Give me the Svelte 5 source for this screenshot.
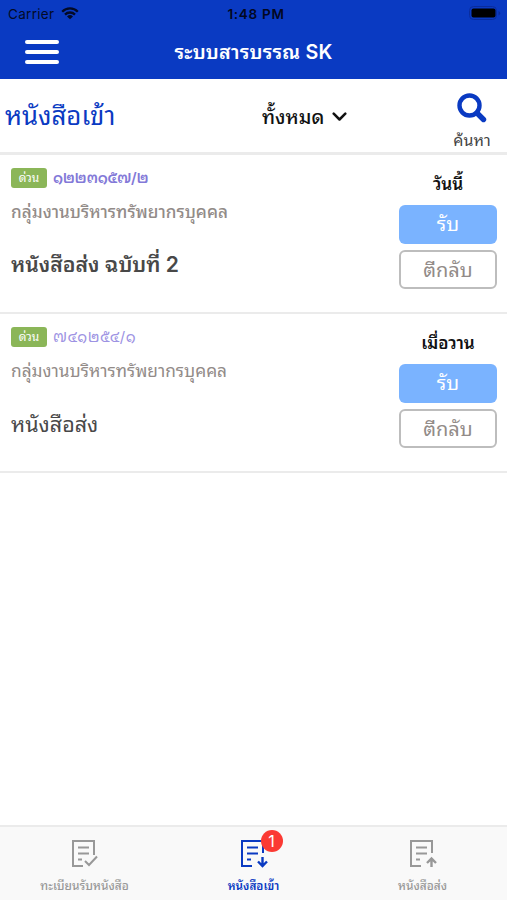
<script lang="ts">
  type Letter = {
    number: string;
    group: string;
    subject: string;
    day: string;
    unread: boolean;
  };

  const letters: Letter[] = [
    {
      number: "๑๒๒๓๑๕๗/๒",
      group: "กลุ่มงานบริหารทรัพยากรบุคคล",
      subject: "หนังสือส่ง ฉบับที่ 2",
      day: "วันนี้",
      unread: true,
    },
    {
      number: "๗๔๑๒๕๔/๑",
      group: "กลุ่มงานบริหารทรัพยากรบุคคล",
      subject: "หนังสือส่ง",
      day: "เมื่อวาน",
      unread: false,
    },
  ];

  const tabs = [
    { id: "register", label: "ทะเบียนรับหนังสือ", badge: 0 },
    { id: "inbox", label: "หนังสือเข้า", badge: 1 },
    { id: "outbox", label: "หนังสือส่ง", badge: 0 },
  ];

  let active = $state("inbox");
</script>

<div class="app">
  <header>
    <div class="status">
      <div class="carrier">
        <span>Carrier</span>
        <svg width="18" height="13" viewBox="0 0 18 13" fill="none" stroke="#030a26" stroke-width="2.3">
          <path d="M1.2 4.7a11 11 0 0 1 15.6 0" />
          <path d="M4 7.6a7 7 0 0 1 10 0" />
          <path d="M9 12.2 6 9.4a4.3 4.3 0 0 1 6 0z" fill="#030a26" stroke="none" />
        </svg>
      </div>
      <span class="time">1:48 PM</span>
      <svg class="battery" width="32" height="15" viewBox="0 0 32 15">
        <rect x="0.5" y="0.5" width="27" height="13" rx="4" fill="none" stroke="#0a2c9c" />
        <rect x="2.5" y="2.5" width="24" height="9" rx="2" fill="#000" />
        <path d="M29.5 5v4.5q1.7-.8 1.7-2.2T29.500 5z" fill="#0a2c9c" />
      </svg>
    </div>
    <div class="nav">
      <button class="menu" aria-label="เมนู"><i></i><i></i><i></i></button>
      <h1>ระบบสารบรรณ SK</h1>
    </div>
  </header>

  <div class="toolbar">
    <h2>หนังสือเข้า</h2>
    <button class="filter">
      <span>ทั้งหมด</span>
      <svg width="15" height="10" viewBox="0 0 15 10" fill="none" stroke="#111" stroke-width="2.5" stroke-linecap="round" stroke-linejoin="round">
        <path d="M1.700 1.700l5.800 5.800 5.800-5.800" />
      </svg>
    </button>
    <button class="search">
      <svg width="30" height="30" viewBox="0 0 30 30" fill="none" stroke="#0a3ac2">
        <circle cx="12.500" cy="12.500" r="10" stroke-width="4.400" />
        <path d="M20 20l6.500 6.500" stroke-width="5.400" stroke-linecap="round" />
      </svg>
      <span>ค้นหา</span>
    </button>
  </div>

  <main>
    {#each letters as letter}
      <article class:unread={letter.unread}>
        <div class="info">
          <div class="ref">
            <span class="tag">ด่วน</span>
            <span class="number">{letter.number}</span>
          </div>
          <p class="group">{letter.group}</p>
          <p class="subject">{letter.subject}</p>
        </div>
        <div class="actions">
          <span class="day">{letter.day}</span>
          <button class="accept">รับ</button>
          <button class="reject">ตีกลับ</button>
        </div>
      </article>
    {/each}
  </main>

  <nav class="tabs">
    {#each tabs as tab}
      <button class="tab" class:active={active === tab.id} onclick={() => (active = tab.id)}>
        <span class="icon">
          <svg width="28" height="28" viewBox="0 0 28 28" fill="none" stroke="currentColor" stroke-width="2">
            {#if tab.id === "register"}
              <path d="M12 26H2V1h21v14" />
              <path d="M14 21l4 4 8-8.500" />
            {:else}
              <path d="M12 26H2V1h21v12" />
            {/if}
            <path d="M7 7.500h11M7 13.500h11M7 19.500h4" />
            {#if tab.id === "inbox"}
              <path d="M22.500 17v8.500M18 21.500l4.500 4.500 4.500-4.500" stroke-width="2.400" />
            {:else if tab.id === "outbox"}
              <path d="M22.500 27v-8.500M18 23l4.500-4.500 4.500 4.500" stroke-width="2.400" />
            {/if}
          </svg>
          {#if tab.badge}<b class="badge">{tab.badge}</b>{/if}
        </span>
        <span class="label">{tab.label}</span>
      </button>
    {/each}
  </nav>
</div>

<style>
  :global(body) {
    background: #fff;
  }
  .app {
    display: flex;
    flex-direction: column;
    height: 900px;
    font-family: Inter, Thonburi, "Noto Sans Thai Looped", Loma, Garuda, Waree, "Noto Sans Thai", sans-serif;
    white-space: nowrap;
    overflow: hidden;
  }
  button {
    margin: 0;
    padding: 0;
    border: 0;
    background: none;
    font: inherit;
    color: inherit;
  }
  h1,
  h2,
  p {
    margin: 0;
  }
  header {
    height: 79px;
    background: #0a3ac2;
  }
  .status {
    display: grid;
    grid-template-columns: 1fr auto 1fr;
    align-items: center;
    height: 27px;
    padding: 0 6px 0 8px;
    font-size: 13.5px;
    color: #030a26;
  }
  .carrier {
    display: flex;
    align-items: center;
    gap: 7px;
    letter-spacing: 0.3px;
  }
  .time {
    padding-left: 3px;
    font-weight: 600;
    letter-spacing: 0.7px;
    color: #020720;
  }
  .battery {
    justify-self: end;
  }
  .nav {
    display: grid;
    grid-template-columns: 60px 1fr 60px;
    align-items: center;
    height: 50px;
  }
  .menu {
    display: flex;
    flex-direction: column;
    gap: 6px;
    width: 34px;
    margin-left: 25px;
  }
  .menu i {
    height: 4px;
    border-radius: 2px;
    background: #fff;
  }
  h1 {
    font-size: 19.7px;
    font-weight: 600;
    line-height: 34px;
    letter-spacing: 0.2px;
    text-align: center;
    color: #fff;
  }
  .toolbar {
    display: grid;
    grid-template-columns: 257px auto 1fr;
    height: 73px;
    padding: 0 10px 0 5px;
    border-bottom: 3px solid #ebebeb;
  }
  h2 {
    font-size: 25.8px;
    font-weight: 400;
    line-height: 73px;
    color: #0a3ac2;
  }
  .filter {
    display: flex;
    align-items: center;
    gap: 8px;
    font-size: 19.8px;
    font-weight: 500;
    line-height: 30px;
    color: #111;
  }
  .filter span {
    padding-bottom: 3px;
  }
  .filter svg {
    margin-bottom: 3px;
  }
  .search {
    display: flex;
    flex-direction: column;
    align-items: center;
    justify-self: end;
    width: 50px;
    padding-top: 14px;
    font-size: 16px;
    line-height: 34px;
    color: #444;
  }
  .search svg {
    flex: none;
  }
  main {
    flex: 1;
  }
  article {
    display: flex;
    justify-content: space-between;
    height: 157px;
    padding: 0 10px 0 11px;
    border-bottom: 2px solid #ebebeb;
  }
  .ref {
    display: flex;
    align-items: center;
    gap: 6px;
    padding-top: 12px;
  }
  .tag {
    width: 36px;
    height: 20px;
    border-radius: 3px;
    background: #8bb658;
    font-size: 12px;
    line-height: 20px;
    text-align: center;
    color: #fff;
  }
  .number {
    font-size: 15px;
    line-height: 22px;
    letter-spacing: 0.5px;
    color: #9d93e3;
  }
  .group {
    margin-top: 9px;
    font-size: 17.3px;
    line-height: 28px;
    color: #928b88;
  }
  .subject {
    margin-top: 23px;
    font-size: 21.5px;
    line-height: 32px;
    color: #484848;
  }
  .unread .number {
    color: #8379d8;
    font-weight: 600;
    letter-spacing: -0.3px;
  }
  .unread .group {
    font-size: 17.1px;
    font-weight: 500;
  }
  .unread .subject {
    font-size: 21.1px;
    font-weight: 600;
  }
  .actions {
    display: flex;
    flex-direction: column;
    width: 98px;
  }
  .day {
    height: 50px;
    font-size: 17px;
    font-weight: 600;
    line-height: 59px;
    text-align: center;
    color: #111;
  }
  .accept,
  .reject {
    box-sizing: border-box;
    height: 39px;
    border-radius: 6px;
    font-size: 20px;
    line-height: 39px;
  }
  .accept {
    background: #7ab3ff;
    color: #fff;
  }
  .reject {
    margin-top: 6px;
    border: 2px solid #bdbdbd;
    line-height: 36px;
    color: #928b88;
  }
  .tabs {
    display: grid;
    grid-template-columns: repeat(3, 1fr);
    height: 73px;
    border-top: 2px solid #ebebeb;
    background: #f9f9f9;
  }
  .tab {
    display: flex;
    flex-direction: column;
    align-items: center;
    padding-top: 13px;
    color: #989898;
  }
  .tab.active {
    color: #0a3ac2;
  }
  .icon {
    position: relative;
    height: 28px;
  }
  .badge {
    position: absolute;
    top: -10px;
    left: 21px;
    width: 22px;
    height: 22px;
    border-radius: 50%;
    background: #fb3a33;
    font-size: 16px;
    font-weight: 400;
    line-height: 22px;
    text-align: center;
    color: #fff;
  }
  .label {
    margin-top: 8px;
    font-size: 11.9px;
    font-weight: 500;
    line-height: 20px;
  }
  .tab.active .label {
    font-size: 11.7px;
    font-weight: 600;
  }
</style>
